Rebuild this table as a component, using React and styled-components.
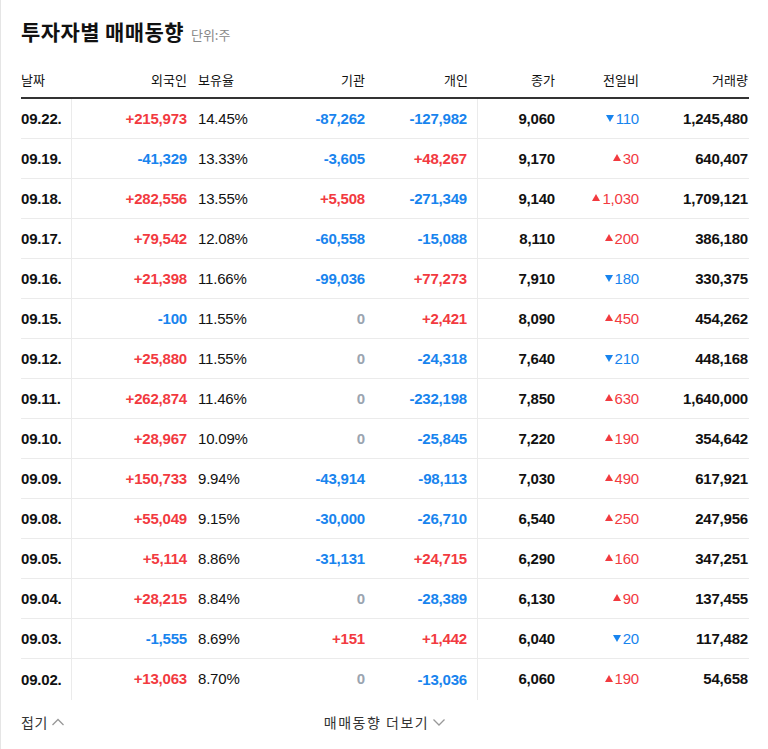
import React from 'react'
import styled, { createGlobalStyle } from 'styled-components'

const GlobalStyle = createGlobalStyle`
  html, body { margin: 0; padding: 0; background: #fff; }
  body { font-family: "Liberation Sans", Arial, "Noto Sans CJK KR", sans-serif; color: #111; }
`

const rows = [
  ['09.22.', '+215,973', '14.45%', '-87,262', '-127,982', '9,060', 'down', '110', '1,245,480'],
  ['09.19.', '-41,329', '13.33%', '-3,605', '+48,267', '9,170', 'up', '30', '640,407'],
  ['09.18.', '+282,556', '13.55%', '+5,508', '-271,349', '9,140', 'up', '1,030', '1,709,121'],
  ['09.17.', '+79,542', '12.08%', '-60,558', '-15,088', '8,110', 'up', '200', '386,180'],
  ['09.16.', '+21,398', '11.66%', '-99,036', '+77,273', '7,910', 'down', '180', '330,375'],
  ['09.15.', '-100', '11.55%', '0', '+2,421', '8,090', 'up', '450', '454,262'],
  ['09.12.', '+25,880', '11.55%', '0', '-24,318', '7,640', 'down', '210', '448,168'],
  ['09.11.', '+262,874', '11.46%', '0', '-232,198', '7,850', 'up', '630', '1,640,000'],
  ['09.10.', '+28,967', '10.09%', '0', '-25,845', '7,220', 'up', '190', '354,642'],
  ['09.09.', '+150,733', '9.94%', '-43,914', '-98,113', '7,030', 'up', '490', '617,921'],
  ['09.08.', '+55,049', '9.15%', '-30,000', '-26,710', '6,540', 'up', '250', '247,956'],
  ['09.05.', '+5,114', '8.86%', '-31,131', '+24,715', '6,290', 'up', '160', '347,251'],
  ['09.04.', '+28,215', '8.84%', '0', '-28,389', '6,130', 'up', '90', '137,455'],
  ['09.03.', '-1,555', '8.69%', '+151', '+1,442', '6,040', 'down', '20', '117,482'],
  ['09.02.', '+13,063', '8.70%', '0', '-13,036', '6,060', 'up', '190', '54,658'],
]

const COLS = '51px 115px 93px 85px 113px 77px 84px 110px'

const Page = styled.div`
  min-height: 749px;
  border-left: 1px solid #e5e5e5;
  padding: 16px 19px 0 20px;
  box-sizing: border-box;
  width: 768px;
`

const TitleBar = styled.div`
  display: flex;
  align-items: baseline;
  gap: 7px;
  height: 30px;
`

const Title = styled.h2`
  margin: 0;
  font-family: "Noto Sans CJK KR", sans-serif;
  font-size: 21px;
  font-weight: 700;
  letter-spacing: 0.4px;
  color: #111;
`

const Unit = styled.span`
  font-family: "Noto Sans CJK KR", sans-serif;
  font-size: 13px;
  color: #888;
`

const Table = styled.div`
  margin-top: 15px;
  width: 728px;
`

const HeadRow = styled.div`
  display: grid;
  grid-template-columns: ${COLS};
  height: 36px;
  align-items: center;
  border-bottom: 2px solid #333;
  font-family: "Noto Sans CJK KR", sans-serif;
  font-size: 13px;
  color: #111;
`

const HeadCell = styled.div`
  text-align: ${p => (p.$left ? 'left' : 'right')};
  padding-left: ${p => p.$pl || 0}px;
  padding-right: ${p => p.$pr || 0}px;
`

const Row = styled.div`
  display: grid;
  grid-template-columns: ${COLS};
  height: 40px;
  border-bottom: ${p => (p.$last ? 'none' : '1px solid #ebebeb')};
  box-sizing: border-box;
`

const Cell = styled.div`
  display: flex;
  align-items: center;
  justify-content: ${p => (p.$left ? 'flex-start' : 'flex-end')};
  padding-left: ${p => p.$pl || 0}px;
  padding-right: ${p => p.$pr || 0}px;
  padding-bottom: 1px;
  font-size: 15px;
  font-weight: ${p => (p.$light ? 400 : 700)};
  letter-spacing: -0.2px;
  color: ${p => p.$color || '#111'};
  border-right: ${p => (p.$divider ? '1px solid #ebebeb' : 'none')};
  margin-bottom: ${p => (p.$divider ? '-1px' : '0')};
`

const Change = styled.span`
  display: inline-flex;
  align-items: center;
  gap: 2px;
  font-size: 15px;
  font-weight: 400;
  color: ${p => (p.$dir === 'up' ? '#f23a3f' : '#1884ee')};
`

const Arrow = styled.span`
  width: 0;
  height: 0;
  border-left: 4px solid transparent;
  border-right: 4px solid transparent;
  ${p =>
    p.$dir === 'up'
      ? `border-bottom: 7px solid #f23a3f; margin-top: -1px;`
      : `border-top: 7px solid #1884ee; margin-top: 1px;`}
`

const Footer = styled.div`
  display: grid;
  grid-template-columns: 1fr auto 1fr;
  align-items: center;
  margin-top: 13px;
  font-family: "Noto Sans CJK KR", sans-serif;
  font-size: 14px;
  color: #333;
`

const FootLink = styled.span`
  display: inline-flex;
  align-items: center;
  gap: 3px;
  letter-spacing: ${p => p.$ls || 0}px;
`

const Chevron = ({ up }) => (
  <svg width="14" height="10" viewBox="0 0 14 10" fill="none">
    <path d={up ? 'M1.5 8 L7 2.5 L12.5 8' : 'M1.5 2.5 L7 8 L12.5 2.5'} stroke="#999" strokeWidth="1.3" />
  </svg>
)

const tone = v => (v.startsWith('+') ? '#f23a3f' : v.startsWith('-') ? '#1884ee' : '#9aa4b0')

export default function App() {
  return (
    <Page>
      <GlobalStyle />
      <TitleBar>
        <Title>투자자별 매매동향</Title>
        <Unit>단위:주</Unit>
      </TitleBar>
      <Table>
        <HeadRow>
          <HeadCell $left>날짜</HeadCell>
          <HeadCell>외국인</HeadCell>
          <HeadCell $left $pl={11}>보유율</HeadCell>
          <HeadCell>기관</HeadCell>
          <HeadCell $pr={10}>개인</HeadCell>
          <HeadCell>종가</HeadCell>
          <HeadCell>전일비</HeadCell>
          <HeadCell $pr={1}>거래량</HeadCell>
        </HeadRow>
        {rows.map((r, i) => (
          <Row key={r[0]} $last={i === rows.length - 1}>
            <Cell $left $divider>{r[0]}</Cell>
            <Cell $color={tone(r[1])}>{r[1]}</Cell>
            <Cell $left $light $pl={11}>{r[2]}</Cell>
            <Cell $color={tone(r[3])}>{r[3]}</Cell>
            <Cell $color={tone(r[4])} $pr={10} $divider>{r[4]}</Cell>
            <Cell>{r[5]}</Cell>
            <Cell>
              <Change $dir={r[6]}>
                <Arrow $dir={r[6]} />
                {r[7]}
              </Change>
            </Cell>
            <Cell $pr={1}>{r[8]}</Cell>
          </Row>
        ))}
      </Table>
      <Footer>
        <FootLink $ls={0.5}>접기<Chevron up /></FootLink>
        <FootLink $ls={1.5}>매매동향 더보기<Chevron /></FootLink>
        <span />
      </Footer>
    </Page>
  )
}
